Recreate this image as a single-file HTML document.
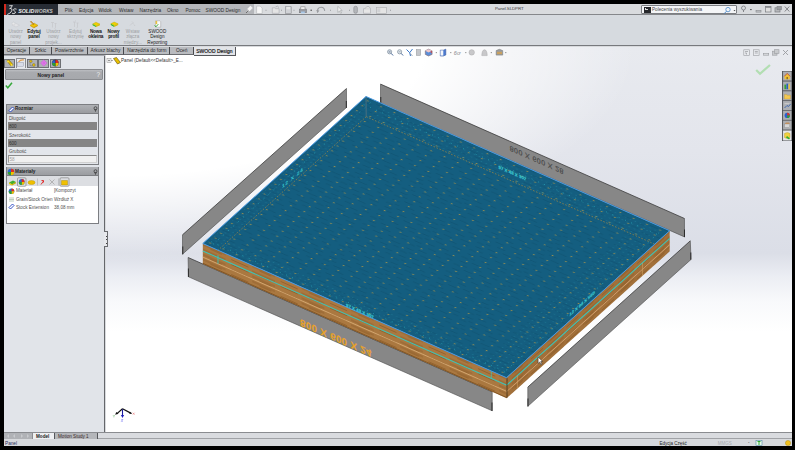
<!DOCTYPE html>
<html><head><meta charset="utf-8">
<style>
*{margin:0;padding:0;box-sizing:border-box}
html,body{width:795px;height:450px;overflow:hidden;background:#000;font-family:"Liberation Sans",sans-serif}
.a{position:absolute}
.t{position:absolute;white-space:nowrap;line-height:1}
.menu{position:absolute;white-space:nowrap;line-height:1;font-size:4.8px;color:#303030;top:8.6px}
.btn{position:absolute;font-size:4.6px;line-height:5.3px;text-align:center;color:#9c9ea2;white-space:nowrap;top:29.2px;width:30px;margin-left:-15px}
.btn.en{color:#151515;font-weight:bold;font-size:4.7px;letter-spacing:-0.17px}
.tab{position:absolute;z-index:5;top:46.5px;height:8px;background:#b9bbbf;border-right:1px solid #48494d;border-bottom:1px solid #6a6c70;font-size:4.8px;color:#2a2a2a;text-align:center;line-height:8px;white-space:nowrap}
.pm{position:absolute;font-size:4.6px;color:#505050;white-space:nowrap;line-height:1}
.ic{position:absolute}
</style></head><body>
<!-- window frame -->
<div class="a" style="left:4px;top:3.5px;width:788px;height:442.5px;background:#d8dadd"></div>
<!-- menu bar -->
<div class="a" style="left:4px;top:3.5px;width:249.5px;height:11.8px;background:#b4b6ba;border-bottom:1px solid #85878b"></div>
<div class="a" style="left:253.5px;top:3.5px;width:538.5px;height:11.8px;background:#d9dbde;border-bottom:1px solid #85878b"></div>
<div class="a" style="left:4px;top:3.5px;width:53.5px;height:11.8px;background:#272c34;border-left:2.2px solid #d42a1e"></div>
<!-- logo -->
<svg class="a" style="left:4px;top:3.5px" width="54" height="12" viewBox="0 0 54 12">
  <path d="M5.6 1.8 L8.4 1.6 L6.6 4.4 Q8.6 4.6 7.8 6.8 Q7 9.2 3.6 10.4 M6.6 4.4 L5.8 4.6" fill="none" stroke="#e8e8e8" stroke-width="0.9" stroke-linecap="round"/><path d="M12.2 5 Q10.4 4.2 9.6 5.4 Q9.2 6.6 10.6 7.1 Q12 7.7 11.2 9 Q10.2 10.1 8.4 9.4" fill="none" stroke="#e8e8e8" stroke-width="0.9" stroke-linecap="round"/>
  <text x="14.2" y="9.4" font-family="Liberation Sans" font-style="italic" font-weight="bold" font-size="5.3" fill="#f0f0f0" textLength="16.2" lengthAdjust="spacingAndGlyphs">SOLID</text>
  <text x="30.6" y="9.4" font-family="Liberation Sans" font-style="italic" font-weight="bold" font-size="5.3" fill="#c8c8c8" textLength="18.2" lengthAdjust="spacingAndGlyphs">WORKS</text>
</svg>
<div class="menu" style="left:64.8px">Plik</div>
<div class="menu" style="left:79px">Edycja</div>
<div class="menu" style="left:98.4px">Widok</div>
<div class="menu" style="left:119px">Wstaw</div>
<div class="menu" style="left:139.6px">Narzędzia</div>
<div class="menu" style="left:167px">Okno</div>
<div class="menu" style="left:185.4px">Pomoc</div>
<div class="menu" style="left:205.5px">SWOOD Design</div>
<!-- pin -->
<svg class="a" style="left:245px;top:5px" width="8" height="9" viewBox="0 0 8 9"><path d="M1.5 7.5 L3.5 5 M3 4 L5.5 1.5 L7 3 L4.5 5.5 Z" stroke="#f4f4f4" stroke-width="1.1" fill="#fafafa"/><path d="M1.2 8 L3.2 5.5" stroke="#444" stroke-width="0.8"/></svg>
<!-- quick access -->
<svg class="a" style="left:253px;top:3.5px" width="145" height="12" viewBox="253 3.5 145 12">
  <g stroke-width="0.6">
    <path d="M256.6 5.6 h3.6 l2 2 v5.4 h-5.6z" fill="#f6f6f6" stroke="#b0b2b6"/>
    <path d="M272.3 7.3 h2.6 l0.8 0.9 h3.4 v4.6 h-6.8z" fill="#e4e4e4" stroke="#a8aaae"/><path d="M275.5 6.5 q2-2 3.5 0.5" stroke="#9a9ca0" fill="none"/>
    <rect x="285.4" y="6.2" width="5.8" height="6.6" fill="#d0d2d6" stroke="#8a8c90"/><rect x="286.5" y="6.4" width="3.5" height="2.4" fill="#e8e8e8" stroke="none"/>
    <rect x="299.3" y="8.6" width="7.2" height="3.6" fill="#9a9ca2" stroke="#7a7c80"/><rect x="300.8" y="6.3" width="4.2" height="2.6" fill="#f0f0f0" stroke="#888"/><rect x="301" y="11" width="3.8" height="1.8" fill="#a8c8e8" stroke="none"/>
    <path d="M317.5 12 q-0.5-5.2 3.6-5.2 q3.2 0 3.6 3.6" stroke="#9a9ca0" stroke-width="1.1" fill="none"/><path d="M316.2 9.5 l1.4 3 l1.8-2.6z" fill="#9a9ca0" stroke="none"/>
    <path d="M337.8 5.8 v6.2 l1.5-1.4 l1.4 2.4 l0.9-0.5 l-1.3-2.4 h2z" fill="#f0f0f0" stroke="#a0a2a6"/>
    <rect x="353.8" y="5.8" width="3.6" height="7" rx="1.6" fill="#b4b6ba" stroke="#8a8c90"/>
    <path d="M363.5 8.2 h7 v4.6 h-7z" fill="#e6e6e6" stroke="#a8aaae"/><path d="M365 8.2 l1.8-2.2 h2.2 l1.5 2.2" fill="#e0e0e0" stroke="#a8aaae"/>
    <rect x="376.3" y="6.8" width="10" height="6" fill="#e4e4e4" stroke="#a8aaae"/><rect x="377.3" y="7.8" width="3" height="4" fill="#cfd1d4" stroke="none"/>
  </g>
  <g fill="#8a8c90">
    <rect x="265.5" y="9.3" width="1" height="0.8"/><rect x="281" y="9.3" width="1" height="0.8"/><rect x="293.5" y="9.3" width="1" height="0.8"/>
    <rect x="310.5" y="9.2" width="1.4" height="1" fill="#333"/><rect x="330" y="9.3" width="1" height="0.8"/><rect x="349" y="9.3" width="1" height="0.8"/><rect x="390" y="9.3" width="1" height="0.8"/>
  </g>
</svg>
<div class="t" style="left:495px;top:7.4px;font-size:4.4px;color:#404040;letter-spacing:-0.1px">Panel.SLDPRT</div>
<!-- search box -->
<div class="a" style="left:641px;top:5.3px;width:96px;height:9px;background:#f4f5f7;border:1px solid #7c7e82;border-radius:1px"></div>
<div class="a" style="left:643.5px;top:7px;width:7px;height:5.5px;background:#26282c"></div>
<div class="a" style="left:644.5px;top:8px;width:3px;height:2px;border-left:0.6px solid #ddd;border-bottom:0.6px solid #ddd"></div>
<div class="t" style="left:652px;top:7.9px;font-size:4.65px;color:#4a4a4a">Polecenia wyszukiwania</div>
<svg class="a" style="left:722px;top:5.5px" width="16" height="9" viewBox="0 0 16 9"><circle cx="6" cy="3.6" r="2.2" fill="none" stroke="#4a88c8" stroke-width="0.8"/><path d="M4.4 5.3 L2.2 7.6" stroke="#4a88c8" stroke-width="1"/><path d="M11.5 4 h2 l-1 1.2z" fill="#444"/></svg>
<!-- window controls -->
<svg class="a" style="left:738px;top:4px" width="54" height="11" viewBox="738 4 54 11">
  <circle cx="743.5" cy="8" r="2" fill="none" stroke="#7a7c80" stroke-width="0.8"/><path d="M743.5 10 v2" stroke="#7a7c80" stroke-width="0.9"/>
  <rect x="750.2" y="9.2" width="1.4" height="0.9" fill="#222"/>
  <rect x="756" y="10.5" width="5" height="1.6" fill="#bfc1c5" stroke="#7a7c80" stroke-width="0.5"/>
  <rect x="765.5" y="6.5" width="5.5" height="5.5" fill="#e0e0e0" stroke="#7a7c80" stroke-width="0.7"/><rect x="765.5" y="6.5" width="5.5" height="1.2" fill="#7a7c80"/>
  <rect x="775" y="7.8" width="5" height="4.2" fill="#b8babd" stroke="#7a7c80" stroke-width="0.7"/><rect x="777" y="6.3" width="4.5" height="3.5" fill="#9a9ca0" stroke="#7a7c80" stroke-width="0.5"/>
  <path d="M784.8 6.5 l4.5 5 M789.3 6.5 l-4.5 5" stroke="#7a7c80" stroke-width="0.9"/>
</svg>
<!-- command manager -->
<div class="a" style="left:4px;top:15.3px;width:788px;height:31.2px;background:#d6dadf;border-bottom:1px solid #77797d"></div>
<svg class="a" style="left:4px;top:16px" width="170" height="14" viewBox="4 16 170 14">
  <path d="M12 25 l3.5-1.8 l4 2 l-3.5 1.8z" fill="#e2e3e6" stroke="#c4c6ca" stroke-width="0.5"/><path d="M13.5 21.5 l0.6 1.4 l1.4 0.2 l-1 0.9 l0.3 1.4 l-1.3-0.7 l-1.3 0.7 l0.3-1.4 l-1-0.9 l1.4-0.2z" fill="#e8e8ea" stroke="#c8cacc" stroke-width="0.4"/>
  <path d="M30.2 25.2 l4-2 l3.6 2 l-4 2.2z" fill="#f4c800" stroke="#b08800" stroke-width="0.4"/><path d="M30.2 25.2 l3.6 2.2 v0.8 l-3.6-2.2z" fill="#d8a000"/><path d="M33.8 27.4 l4-2.2 v0.8 l-4 2.2z" fill="#c89000"/>
  <path d="M31 21 l3.2 3.2 l-0.9 0.6 l-3-3z" fill="#e8a020" stroke="#7a5010" stroke-width="0.35"/>
  <path d="M51 22.5 h3 M52.5 22.5 v5 M54.5 23.5 h2 M55.5 23.5 v4 q0 1 -1 1" stroke="#c6c8cb" stroke-width="0.8" fill="none"/>
  <path d="M73 22 h3 M74.5 22 v5 M76.5 23 h2 M77.5 23 v4 q0 1 -1 1" stroke="#c6c8cb" stroke-width="0.8" fill="none"/><path d="M75 21 l1-0.8" stroke="#c6c8cb" stroke-width="0.5"/>
  <path d="M92.6 24 l3.3-1.8 l4 1.8 l-3.3 1.9z" fill="#f0d000" stroke="#b09a00" stroke-width="0.35"/><path d="M92.6 24 l3.4 1.9 v1.2 l-3.4-1.9z" fill="#30b818"/><path d="M96 25.9 l4-1.9 v1.2 l-4 1.9z" fill="#d8b800"/>
  <path d="M110.8 23.8 l3.3-1.8 l4 1.8 l-3.3 1.9z" fill="#f0d000" stroke="#b09a00" stroke-width="0.35"/><path d="M110.8 23.8 l3.4 1.9 v1.2 l-3.4-1.9z" fill="#30b818"/><path d="M114.2 25.7 l4-1.9 v1.2 l-4 1.9z" fill="#d8b800"/>
  <path d="M130 25.5 l2.5-2.5 l1.2 1.2 M132 21.5 l1.5 1.5 M134 24.5 l1 1.5" stroke="#c6c8cb" stroke-width="0.8" fill="none"/>
  <path d="M155.5 20.8 h4.4 l0.8 0.8 v5.6 h-5.2z" fill="#fafafa" stroke="#8a8c90" stroke-width="0.4"/><rect x="155.6" y="20.9" width="1.6" height="3.2" fill="#e8c040"/><path d="M154.6 25.4 l1.3 1.4 l2.4-2.6" stroke="#28a828" stroke-width="0.9" fill="none"/>
</svg>
<div class="btn" style="left:15.7px">Utwórz<br>nowy<br>panel</div>
<div class="btn en" style="left:34px">Edytuj<br>panel</div>
<div class="btn" style="left:53.5px">Utwórz<br>nowy<br>projek...</div>
<div class="btn" style="left:75.5px">Edytuj<br>skrzynię</div>
<div class="btn en" style="left:95.8px">Nowa<br>okleina</div>
<div class="btn en" style="left:113.5px">Nowy<br>profil</div>
<div class="btn" style="left:132.7px">Wstaw<br>złącza<br>między...</div>
<div class="btn" style="left:157.3px;color:#222">SWOOD<br>Design<br>Reporting</div>
<!-- tabs -->
<div class="a" style="z-index:4;left:4px;top:46.5px;width:190px;height:8px;background:#b9bbbf;border-bottom:1px solid #6a6c70"></div>
<div class="tab" style="left:4px;width:25.8px">Operacje</div>
<div class="tab" style="left:29.8px;width:22.4px">Szkic</div>
<div class="tab" style="left:52.2px;width:35.4px">Powierzchnie</div>
<div class="tab" style="left:87.6px;width:36.6px">Arkusz blachy</div>
<div class="tab" style="left:124.2px;width:46.3px">Narzędzia do form</div>
<div class="tab" style="left:170.5px;width:23.3px">Oceń</div>
<div class="tab" style="left:193.7px;width:42.3px;height:9px;background:#e2e4e8;color:#222;border-right:1px solid #55575b;border-bottom:1px solid #55575b;font-size:5px;color:#111;-webkit-text-stroke:0.15px #111">SWOOD Design</div>
<!-- left panel -->
<div class="a" style="left:4px;top:55.3px;width:100.5px;height:377px;background:#e1e4e9;border-right:1.2px solid #65676b"></div>
<div class="a" style="left:4px;top:54.5px;width:101px;height:1px;background:#a8aab0"></div>
<!-- panel tabs -->
<div class="a" style="left:4px;top:58.5px;width:11px;height:9px;background:#aeb0b4;border:0.7px solid #6e7074"></div>
<div class="a" style="left:15.8px;top:58px;width:10.2px;height:9.5px;background:#e6e8ec;border:0.7px solid #8a8c90;border-bottom:none"></div>
<div class="a" style="left:26.5px;top:58.5px;width:11.2px;height:9px;background:#aeb0b4;border:0.7px solid #6e7074"></div>
<div class="a" style="left:38.2px;top:58.5px;width:11.2px;height:9px;background:#aeb0b4;border:0.7px solid #6e7074"></div>
<div class="a" style="left:49.9px;top:58.5px;width:10.8px;height:9px;background:#aeb0b4;border:0.7px solid #6e7074"></div>
<svg class="a" style="left:4px;top:58px" width="58" height="10" viewBox="4 58 58 10">
  <path d="M6.8 60.8 l2.2-0.8 l4 4.6 l-2.2 1.2z" fill="#e8c000" stroke="#5a4a00" stroke-width="0.45"/><circle cx="8" cy="61.5" r="1" fill="#f8e040"/><circle cx="11.6" cy="65" r="1" fill="#f8e040"/>
  <rect x="17.5" y="62.3" width="6.2" height="4" fill="#d8dce8" stroke="#8a90a0" stroke-width="0.4"/><path d="M18.5 62 q2-2.6 5.5-2" stroke="#e0a050" stroke-width="1.2" fill="none"/>
  <circle cx="30.8" cy="61.3" r="1.3" fill="#e8c000" stroke="#555" stroke-width="0.4"/><circle cx="33.8" cy="65" r="1.4" fill="#e8c000" stroke="#555" stroke-width="0.4"/><path d="M30 62.5 v3 l2.5 0.5" stroke="#777" stroke-width="0.6" fill="none"/>
  <path d="M43.8 59.8 l3.2 3.2 l-3.2 3.2 l-3.2-3.2z" fill="#e078e8" stroke="#c050d0" stroke-width="0.4"/><circle cx="43.8" cy="63" r="0.9" fill="none" stroke="#c050d0" stroke-width="0.3"/>
  <circle cx="55.3" cy="63" r="3.2" fill="#2a60d0" stroke="#222" stroke-width="0.35"/><path d="M55.3 63 L55.3 59.8 A3.2 3.2 0 0 1 58.5 63z" fill="#e02818"/><path d="M55.3 63 L58.5 63 A3.2 3.2 0 0 1 55.3 66.2z" fill="#f0c000"/><path d="M55.3 63 L55.3 66.2 A3.2 3.2 0 0 1 52.1 63z" fill="#30a030"/><path d="M55.3 59.8 v6.4" stroke="#111" stroke-width="0.3"/>
</svg>
<!-- Nowy panel header -->
<div class="a" style="left:4.5px;top:69px;width:98.8px;height:10.7px;background:linear-gradient(#bcbec2 0%,#a9abaf 25%,#a6a8ac 100%);border:0.6px solid #8a8c90;border-radius:1px"></div>
<div class="t" style="left:37.5px;top:74.2px;font-size:4.8px;font-weight:bold;color:#1e1e1e">Nowy panel</div>
<div class="t" style="left:96.5px;top:71.6px;font-size:6.4px;color:#eeeeee">?</div>
<svg class="a" style="left:5px;top:82px" width="8" height="7" viewBox="0 0 8 7"><path d="M0.8 3.6 L2.8 5.8 L7 0.8" fill="none" stroke="#36a83a" stroke-width="1.5"/></svg>
<!-- Rozmiar group -->
<div class="a" style="left:6.3px;top:104.4px;width:92.6px;height:60.6px;background:#e3e6eb;border:0.8px solid #7c7e82"></div>
<div class="a" style="left:6.7px;top:104.8px;width:91.8px;height:8.9px;background:linear-gradient(#aeb0b4,#9a9ca0);border-bottom:0.6px solid #7c7e82"></div>
<svg class="a" style="left:7.5px;top:105.5px" width="7" height="7" viewBox="0 0 7 7"><path d="M1 4.5 L4.5 1 L6 2.5 L2.5 6z" fill="#fff" stroke="#2040c0" stroke-width="0.9"/></svg>
<div class="t" style="left:15px;top:107.2px;font-size:4.6px;font-weight:bold;color:#1e1e1e">Rozmiar</div>
<svg class="a" style="left:93px;top:106px" width="5" height="6" viewBox="0 0 5 6"><circle cx="2.5" cy="2.2" r="1.5" fill="none" stroke="#333" stroke-width="0.7"/><path d="M1 3.8 L4 3.8 M2.5 3.8 V5.8" stroke="#333" stroke-width="0.6"/></svg>
<div class="pm" style="left:9px;top:117.3px">Długość</div>
<div class="a" style="left:8.2px;top:122.2px;width:88.8px;height:7.8px;background:#858585"></div>
<div class="pm" style="left:9px;top:125.2px;color:#303030">800</div>
<div class="pm" style="left:9px;top:133.6px">Szerokość</div>
<div class="a" style="left:8.2px;top:138.9px;width:88.8px;height:7.8px;background:#858585"></div>
<div class="pm" style="left:9px;top:141.9px;color:#303030">600</div>
<div class="pm" style="left:9px;top:150px">Grubość</div>
<div class="a" style="left:8.2px;top:155.2px;width:88.8px;height:7.8px;background:#f0f0f0;border:0.7px solid #d0d0d0;border-top-color:#8a8a8a;border-left-color:#9a9a9a"></div>
<div class="pm" style="left:9.5px;top:158px;color:#a0a0a0">58</div>
<!-- Materialy group -->
<div class="a" style="left:6.4px;top:167px;width:92.5px;height:56.7px;background:#fff;border:0.8px solid #7c7e82"></div>
<div class="a" style="left:6.8px;top:167.4px;width:91.7px;height:9px;background:linear-gradient(#aeb0b4,#9a9ca0);border-bottom:0.6px solid #7c7e82"></div>
<div class="a" style="left:6.8px;top:176.4px;width:91.7px;height:10px;background:#dcdee2"></div>
<svg class="a" style="left:7px;top:167.5px" width="8" height="8" viewBox="0 0 8 8"><circle cx="4" cy="4" r="3.2" fill="#2a6ad0"/><path d="M4 4 L4 0.8 A3.2 3.2 0 0 1 7.2 4z" fill="#e03020"/><path d="M4 4 L7.2 4 A3.2 3.2 0 0 1 4 7.2z" fill="#f0c000"/><path d="M4 4 L4 7.2 A3.2 3.2 0 0 1 0.8 4z" fill="#30a030"/></svg>
<div class="t" style="left:15px;top:169.8px;font-size:4.7px;font-weight:bold;color:#1e1e1e">Materiały</div>
<svg class="a" style="left:93px;top:169px" width="5" height="6" viewBox="0 0 5 6"><circle cx="2.5" cy="2.2" r="1.5" fill="none" stroke="#333" stroke-width="0.7"/><path d="M1 3.8 L4 3.8 M2.5 3.8 V5.8" stroke="#333" stroke-width="0.6"/></svg>
<svg class="a" style="left:7px;top:176.5px" width="64" height="10" viewBox="7 176.5 64 10">
  <path d="M9 182 l4-2 l3 1.5 l-4 2.5z" fill="#40b030"/><path d="M9 182 l3 1.8 v1.2 l-3-1.5z" fill="#e8c800"/><path d="M12 183.8 l4-2.3 v1.2 l-4 2.3z" fill="#c8a800"/>
  <rect x="17.5" y="177.3" width="8.5" height="8.5" fill="none" stroke="#777" stroke-width="0.6" rx="1"/>
  <circle cx="21.7" cy="181.5" r="2.9" fill="#2a6ad0"/><path d="M21.7 181.5 L21.7 178.6 A2.9 2.9 0 0 1 24.6 181.5z" fill="#e03020"/><path d="M21.7 181.5 L24.6 181.5 A2.9 2.9 0 0 1 21.7 184.4z" fill="#f0c000"/><path d="M21.7 181.5 L21.7 184.4 A2.9 2.9 0 0 1 18.8 181.5z" fill="#30a030"/>
  <ellipse cx="31.5" cy="182" rx="3.5" ry="2" fill="#f0c000" stroke="#b09000" stroke-width="0.4"/>
  <rect x="37.3" y="178" width="0.5" height="7" fill="#a0a2a6"/>
  <path d="M41 184 l2.5-3.5 M41.5 180 l2 0 l0 2" stroke="#e02020" stroke-width="0.9" fill="none"/>
  <path d="M49.5 179 l5 5 M54.5 179 l-5 5" stroke="#a8a8a8" stroke-width="0.8"/>
  <rect x="58.3" y="178" width="0.5" height="7" fill="#a0a2a6"/>
  <rect x="60" y="177.3" width="9" height="8.5" fill="none" stroke="#777" stroke-width="0.6" rx="1"/>
  <path d="M61.5 180 h6 v4.5 h-6z" fill="#f0c000" stroke="#a08000" stroke-width="0.4"/>
</svg>
<svg class="a" style="left:7.5px;top:187.5px" width="8" height="24" viewBox="0 0 8 24">
  <circle cx="3.5" cy="3.2" r="2.8" fill="#2a6ad0"/><path d="M3.5 3.2 L3.5 0.4 A2.8 2.8 0 0 1 6.3 3.2z" fill="#e03020"/><path d="M3.5 3.2 L6.3 3.2 A2.8 2.8 0 0 1 3.5 6z" fill="#f0c000"/><path d="M3.5 3.2 L3.5 6 A2.8 2.8 0 0 1 0.7 3.2z" fill="#30a030"/>
  <path d="M1 10 h5 M1 11.5 h5 M1 13 h5" stroke="#7a9a7a" stroke-width="0.5"/>
  <path d="M1 19.5 L4.5 16 L6 17.5 L2.5 21z" fill="#fff" stroke="#2040c0" stroke-width="0.9"/>
</svg>
<div class="pm" style="left:16px;top:188.6px">Materiał</div>
<div class="pm" style="left:54px;top:188.6px">[Kompozyt</div>
<div class="pm" style="left:16px;top:197.8px">Grain/Stock Orien</div>
<div class="pm" style="left:54px;top:197.8px">Wzdłuż X</div>
<div class="pm" style="left:16px;top:205.6px">Stock Extension</div>
<div class="pm" style="left:54px;top:205.6px">38,08 mm</div>
<!-- splitter bump -->
<div class="a" style="z-index:5;left:104.3px;top:231.4px;width:4.2px;height:16px;background:#e6e8ec;border:1px solid #6a6c70;border-left:none"></div>
<div class="a" style="z-index:6;left:106px;top:235.5px;width:1px;height:1px;background:#444"></div>
<div class="a" style="z-index:6;left:106px;top:239px;width:1px;height:1px;background:#444"></div>
<div class="a" style="z-index:6;left:106px;top:242.5px;width:1px;height:1px;background:#444"></div>

<!-- viewport -->
<div class="a" id="vp" style="left:105.5px;top:46.5px;width:686.5px;height:385.8px;overflow:hidden;background:linear-gradient(180deg,#e8eaef 0px,#e3e5ec 104px,#dbdee7 206px,#ebedf3 229px,#f8f9fb 254px,#ffffff 285px,#ffffff 100%)">
  <div class="a" style="left:0;top:0;width:686.5px;height:385.8px;background:radial-gradient(ellipse 530px 215px at 0 0,#ffffff 0%,#ffffff 60%,rgba(255,255,255,0) 100%)"></div>
</div>
<!-- tree -->
<svg class="a" style="left:105.5px;top:57px" width="16" height="8" viewBox="0 0 16 8">
  <rect x="1" y="1.5" width="4" height="4" fill="none" stroke="#888" stroke-width="0.5"/><path d="M2 3.5 h2 M3 2.5 v2 M5 3.5 h2" stroke="#555" stroke-width="0.5"/>
  <path d="M7.5 1.5 l3-1 l4 5 l-3 1.5z" fill="#e8c000" stroke="#5a4a10" stroke-width="0.6"/>
</svg>
<div class="t" style="left:121px;top:58.5px;font-size:4.65px;color:#333">Panel  (Default&lt;&lt;Default&gt;_E...</div>
<!-- heads-up toolbar -->
<svg class="a" style="left:385px;top:48px" width="125" height="10" viewBox="385 48 125 10">
  <g stroke-width="0.6">
    <circle cx="389.6" cy="51.8" r="2.1" fill="#dfe6ee" stroke="#6a7a8a"/><rect x="388.6" y="50.8" width="2" height="2" fill="#9aa8b8" stroke="none"/><path d="M391.1 53.3 l2 2.2" stroke="#4a6a9a" stroke-width="1"/>
    <circle cx="399.6" cy="51.8" r="2.1" fill="#e6ecf2" stroke="#6a7a8a"/><path d="M398.6 51.8 h2" stroke="#6a7a8a"/><path d="M401.1 53.3 l2 2.2" stroke="#4a6a9a" stroke-width="1"/>
    <path d="M406.5 49.5 l3.2 3.2 l2.8-3.7 M409.7 52.7 l0.8 3.3" stroke="#3a78c8" stroke-width="1" fill="none"/>
    <path d="M410 54 l2.5 1.5" stroke="#7a8aa0" stroke-width="0.8"/>
    <rect x="416.3" y="49.6" width="4.4" height="5.8" fill="#c4c6ca" stroke="#a0a2a6"/>
    <path d="M425.3 50.8 l3.2-1.6 l3.6 1.6 v3.6 l-3.6 1.6 l-3.2-1.6z" fill="#5c8ed8" stroke="#8a6a6a"/><path d="M428.5 49.2 l3.6 1.6 l-3.6 1.6 l-3.2-1.6z" fill="#f0c8c8" stroke="none"/><path d="M430 52 l2 -1 v2z" fill="#d04040" stroke="none"/>
    <path d="M440.3 50.2 h3 l2.5-1 v5.8 l-2.5 1 h-3z" fill="#4a7ad0" stroke="#3a5aa0"/><rect x="440.5" y="50.4" width="2.8" height="5.2" fill="#f4f6fa" stroke="none"/>
    <circle cx="471.7" cy="52.4" r="2.7" fill="#c8c8ca" stroke="#b0b0b2"/>
    <path d="M481.8 55.6 q0.2-5.8 2.7-5.8 q2.5 0 2.7 5.8z" fill="#c8c8ca" stroke="#b0b0b2"/>
    <path d="M496.2 50.6 l3.2-1.3 l3.3 1.3 v4.5 h-6.5z" fill="#9a9c9e" stroke="#7a7c7e"/><rect x="497" y="51.8" width="5" height="2.4" fill="#c8a060" stroke="none"/>
  </g>
  <text x="453.8" y="54.8" font-family="Liberation Sans" font-style="italic" font-size="5.6" fill="#8a8c90">6ơ</text>
  <g fill="#555"><rect x="435.8" y="52.3" width="1" height="0.8"/><rect x="450.3" y="52.3" width="1" height="0.8"/><rect x="465.3" y="52.3" width="1" height="0.8"/><rect x="490.8" y="52.3" width="1" height="0.8"/><rect x="505.3" y="52.3" width="1" height="0.8"/></g>
</svg>
<!-- viewport window icons -->
<svg class="a" style="left:740px;top:48px" width="52" height="9" viewBox="740 48 52 9">
  <g stroke="#9a9ca0" stroke-width="0.6" fill="#e8eaee">
    <rect x="743.8" y="49.8" width="5.5" height="5.5"/><rect x="753.6" y="49.8" width="5.5" height="5.5"/>
    <path d="M745 51.5 h3 M745 53 h1.5 v1.5" fill="none" stroke="#8a8c90"/><path d="M754.8 51.5 h3 M754.8 53 h3" fill="none" stroke="#8a8c90"/>
    <rect x="763.5" y="53.6" width="5.2" height="1.6" fill="#d8dadd"/>
    <rect x="772.5" y="51.2" width="4.5" height="4" fill="#c8cacd"/><rect x="774.5" y="49.7" width="4.5" height="3.6" fill="#c8cacd"/>
    <path d="M783 50 l5 5 M788 50 l-5 5" stroke-width="0.9"/>
  </g>
</svg>
<svg class="a" style="left:754px;top:63px" width="18" height="14" viewBox="0 0 18 14"><path d="M2.2 7 L6 10.8 L16 2" fill="none" stroke="#b2deb2" stroke-width="2.2"/></svg>
<!-- task pane -->
<div class="a" style="left:782px;top:71px;width:10px;height:70px;background:#9a9ca0;border-left:0.8px solid #505256"></div>
<svg class="a" style="left:782px;top:71px" width="10" height="70" viewBox="0 0 10 70">
  <g stroke="#505256" stroke-width="0.5" fill="#acaeb2"><rect x="0.8" y="0.4" width="9" height="9.5"/><rect x="0.8" y="10.2" width="9" height="9.5"/><rect x="0.8" y="20" width="9" height="9.5"/><rect x="0.8" y="29.8" width="9" height="9.5"/><rect x="0.8" y="39.6" width="9" height="9.5"/><rect x="0.8" y="49.4" width="9" height="9.5"/><rect x="0.8" y="59.2" width="9" height="10.6" fill="#e4e6ea"/></g>
  <path d="M2.6 5.2 l2.6-2.6 l2.6 2.6 v3 h-5.2z" fill="#f2c030"/><path d="M2.2 5.4 l3-3 l3 3" stroke="#c03020" stroke-width="0.7" fill="none"/><rect x="4.5" y="6" width="1.4" height="2.2" fill="#8a6a20"/>
  <rect x="2.4" y="13.6" width="1.8" height="4.6" fill="#38a038"/><rect x="4.4" y="12.6" width="1.8" height="5.6" fill="#2860c0"/><rect x="6.4" y="13.2" width="1.6" height="5" fill="#e8c040"/>
  <path d="M2.4 23.4 h2.2 l0.6 0.8 h3.2 v3.8 h-6z" fill="#f4c850" stroke="#c09020" stroke-width="0.3"/>
  <path d="M2.5 37 l2.5-2.5 l1.5 1 l2-2.5" stroke="#2a5ab0" stroke-width="0.8" fill="none"/><rect x="2.5" y="32" width="5" height="1.2" fill="#c8c8c8"/>
  <circle cx="5.2" cy="44.4" r="2.6" fill="#2a60d0"/><path d="M5.2 44.4 V41.8 A2.6 2.6 0 0 1 7.8 44.4z" fill="#e03020"/><path d="M5.2 44.4 H7.8 A2.6 2.6 0 0 1 5.2 47z" fill="#30a030"/>
  <rect x="2.6" y="53" width="5.2" height="3.6" fill="#d8d8d8" stroke="#777" stroke-width="0.3"/><path d="M2.6 53 l1.5-1.5 h3 l0.7 1.5" fill="#c09060"/>
  <path d="M2.4 62.5 q3-2 5.6 0 v4 q-3 2 -5.6 0z" fill="#f0d040" stroke="#a08010" stroke-width="0.3"/><path d="M5 65 l3 2.5 l-1 1 l-3-2z" fill="#30b030"/>
</svg>

<!-- 3D scene -->
<svg class="a" style="left:105.5px;top:46.5px" width="686.5" height="385.8" viewBox="105.5 46.5 686.5 385.8">
  <defs>
    <pattern id="odots" patternUnits="userSpaceOnUse" width="35" height="20" x="8" y="6">
      <ellipse cx="4" cy="4" rx="2.6" ry="1.7" fill="#b49a46" opacity="0.85"/>
    </pattern>
    <pattern id="grain" patternUnits="userSpaceOnUse" width="120" height="29">
      <path d="M2 3 q8 -1 18 0.5 M34 9 q10 1 22 -0.5 M70 4 q9 -1 20 1 M8 17 q10 1 19 -1 M48 22 q10 -1 21 0.5 M86 15 q12 1 24 -1 M100 26 q6 -1 14 0 M22 27 q6 0.5 12 0" stroke="#0a4560" stroke-width="2.2" fill="none" opacity="0.38"/>
    </pattern>
    <pattern id="cdots" patternUnits="userSpaceOnUse" width="13" height="11" x="3" y="2">
      <ellipse cx="3" cy="3" rx="2.2" ry="1.6" fill="#2fa8b8" opacity="0.8"/>
    </pattern>
    <pattern id="wgrain" patternUnits="userSpaceOnUse" width="130" height="5">
      <path d="M0 1 h60 M75 3.5 h45 M20 2.3 h30" stroke="#7a4c1a" stroke-width="0.9" opacity="0.75"/>
    </pattern>
  </defs>
  <!-- strips -->
  <g stroke-linejoin="round">
    <polygon points="182,234.3 346,88 346,107 182,253.7" fill="#878787"/>
    <path d="M182,234.3 L346,88" stroke="#333" stroke-width="0.75" fill="none"/>
    <path d="M182,253.7 L346,107 M346,88 V107 M182,234.3 V253.7" stroke="#4a4a4a" stroke-width="0.6" fill="none"/>
    <polygon points="380,83.6 684,218 684,236.4 380,102.6" fill="#878787"/>
    <path d="M380,83.6 L684,218" stroke="#333" stroke-width="0.75" fill="none"/>
    <path d="M684,218 V236.4 L380,102.6 V83.6" stroke="#4a4a4a" stroke-width="0.6" fill="none"/>
    <polygon points="187.6,257 491.7,391.3 491.7,410.3 188,276.3" fill="#878787"/>
    <path d="M187.6,257 L491.7,391.3" stroke="#333" stroke-width="0.75" fill="none"/>
    <path d="M491.7,391.3 V410.3 L188,276.3 L187.6,257" stroke="#4a4a4a" stroke-width="0.6" fill="none"/>
    <polygon points="527.3,386.6 689.8,240.3 690.5,259 527.3,405.8" fill="#878787"/>
    <path d="M527.3,386.6 L689.8,240.3" stroke="#333" stroke-width="0.75" fill="none"/>
    <path d="M689.8,240.3 L690.5,259 L527.3,405.8 V386.6" stroke="#4a4a4a" stroke-width="0.6" fill="none"/>
  </g>
  <path d="M345.8 100.5 V107.5 M380.3 96.5 V103 M182.3 246 V253.8 M187.9 268 V276.5 M491.5 402 V410.5 M527.5 398 V406 M684 229 V236.6 M690.3 252 V259.2" stroke="#222" stroke-width="0.9"/>
  <!-- strip texts -->
  <text transform="matrix(1,0.441,0,-1,299.5,318.5)" font-family="Liberation Sans" font-weight="bold" font-size="9.7" fill="#e8a228" stroke="#e8a228" stroke-width="0.1" letter-spacing="0.35">800 X 600 X 24</text>
  <text transform="matrix(1,0.441,0,-1,509.3,145.2)" font-family="Liberation Sans" font-size="7" fill="#4a4a4a" stroke="#4a4a4a" stroke-width="0.2" letter-spacing="0.42">800 X 600 X 28</text>
  <!-- wood left face -->
  <g transform="matrix(0.379625,0.16775,0,1,202.3,243)">
    <rect x="0" y="0" width="801" height="20.4" fill="#aa7840"/>
    <rect x="0" y="0" width="801" height="20.4" fill="url(#wgrain)"/>
    <path d="M0 7.4 H801" stroke="#3cc4b8" stroke-width="1.1" vector-effect="non-scaling-stroke"/>
    <path d="M0 13.6 H801" stroke="#dcb07a" stroke-width="0.8" vector-effect="non-scaling-stroke"/>
    <path d="M0 19.8 H801" stroke="#6a4010" stroke-width="0.6" vector-effect="non-scaling-stroke"/>
    <path d="M40 5 V13.5" stroke="#3cc4b8" stroke-width="0.9" vector-effect="non-scaling-stroke"/>
    <path d="M760 0 V7.4" stroke="#3cc4b8" stroke-width="0.7" vector-effect="non-scaling-stroke"/>
  </g>
  <!-- wood right face -->
  <g transform="matrix(-0.272,0.245,0,1,669.2,230.2)">
    <rect x="0" y="0" width="600" height="20.6" fill="#a2703a"/>
    <rect x="0" y="0" width="600" height="20.6" fill="url(#wgrain)"/>
    <path d="M0 7.6 H600" stroke="#3cc4b8" stroke-width="1.1" vector-effect="non-scaling-stroke"/>
    <path d="M0 14 H600" stroke="#d8a878" stroke-width="0.8" vector-effect="non-scaling-stroke"/>
    <path d="M100 7.6 V20.6 M560 7.6 V20.6" stroke="#d8a868" stroke-width="0.5" vector-effect="non-scaling-stroke"/>
  </g>
  <path d="M506.5,377.4 V397.4" stroke="#3a2a10" stroke-width="0.7"/>
  <!-- top face -->
  <g transform="matrix(0.379625,0.16775,-0.272,0.245,365.5,96)">
    <rect x="0" y="0" width="800" height="600" fill="#145e80"/>
    <rect x="0" y="0" width="800" height="600" fill="url(#grain)"/>
    <rect x="0" y="0" width="800" height="600" fill="url(#odots)"/>
    <rect x="45" y="8" width="740" height="45" fill="url(#cdots)" opacity="0.38"/>
    <rect x="6" y="60" width="30" height="530" fill="url(#cdots)" opacity="0.38"/>
    <rect x="730" y="60" width="64" height="530" fill="url(#cdots)" opacity="0.35"/>
    <rect x="45" y="560" width="740" height="35" fill="url(#cdots)" opacity="0.35"/>
    <path d="M40 55 H800 M40 55 V600" stroke="#a88c40" stroke-width="0.8" stroke-dasharray="1.6 1.6" opacity="0.85" vector-effect="non-scaling-stroke" fill="none"/>
    <path d="M0 0 L40 55" stroke="#6a7a80" stroke-width="0.6" vector-effect="non-scaling-stroke"/>
    <path d="M12 25 H790 M20 12 V590 M12 585 H790 M785 20 V590" stroke="#2ab0c0" stroke-width="0.9" stroke-dasharray="0.8 6" vector-effect="non-scaling-stroke" fill="none" opacity="0.9"/>
    <rect x="0" y="0" width="800" height="600" fill="none" stroke="#4898e0" stroke-width="1" vector-effect="non-scaling-stroke"/>
  </g>
  <!-- cyan labels on top -->
  <text transform="matrix(1,-0.84,0,1,281.5,188)" font-family="Liberation Sans" font-weight="bold" font-size="5" fill="#38c4cc" letter-spacing="0.6">12 X 24</text>
  <text transform="matrix(1,0.441,0,1,498,168)" font-family="Liberation Sans" font-weight="bold" font-size="4.4" fill="#3ccad2" stroke="#3ccad2" stroke-width="0.15">97 X 48 X 307</text>
  <text transform="matrix(1,0.441,0,1,345.5,306)" font-family="Liberation Sans" font-weight="bold" font-size="4.4" fill="#3ccad2" stroke="#3ccad2" stroke-width="0.15">97 X 48 X 307</text>
  <text transform="matrix(1,-0.9,0,1,569,316)" font-family="Liberation Sans" font-weight="bold" font-size="4.1" fill="#3ccad2" stroke="#3ccad2" stroke-width="0.15" letter-spacing="-0.05">12 X 96 X 560</text>
  <!-- cursor -->
  <path d="M537.6 356.5 V363 L539.2 361.5 L540.6 364.3 L541.5 363.8 L540.2 361 L542.2 361 Z" fill="#fff" stroke="#222" stroke-width="0.5"/>
  <!-- triad -->
  <g>
    <path d="M122 408.3 L116.2 413.4 M122 408.3 L129.8 412.4" stroke="#111" stroke-width="1.2" fill="none" stroke-linejoin="round"/>
    <path d="M122 408.8 V415.5" stroke="#1a1aa0" stroke-width="1.1"/>
    <path d="M114.6 414.2 l1.2-2.6 l2.2 1.6z" fill="#111"/>
    <path d="M131.6 413.2 l-2.8 0.2 l1.2-2.2z" fill="#111"/>
    <path d="M120.4 414.6 h3.2 l-1.6 3z" fill="#1a1ab8"/>
    <path d="M112.4 414.6 l1 1 l1-1 M113.4 415.6 v1.3" stroke="#60b060" stroke-width="0.5" fill="none"/>
    <path d="M132.3 412.2 l1.8 2 M134.1 412.2 l-1.8 2" stroke="#e86060" stroke-width="0.5"/>
    <path d="M120.8 419 h1.6 l-1.6 1.8 h1.6" stroke="#6060f0" stroke-width="0.5" fill="none"/>
  </g>
</svg>
<!-- bottom tabs / status -->
<div class="a" style="left:4px;top:432.3px;width:788px;height:7px;background:#d9dbdf;border-top:0.8px solid #8a8c90;border-bottom:0.8px solid #a0a2a6"></div>
<div class="a" style="left:4px;top:432.8px;width:27.5px;height:6px;background:#b0b2b6"></div>
<svg class="a" style="left:4px;top:432.8px" width="28" height="6" viewBox="0 0 28 6"><g fill="#c8cacd"><path d="M3 3 l2-2 v4z"/><path d="M9 3 l2-2 v4z"/><path d="M17 1 l2 2 l-2 2z"/><path d="M23 1 l2 2 l-2 2z"/></g></svg>
<div class="a" style="left:31.8px;top:432.8px;width:22.8px;height:6.2px;background:#eeeff2;border-right:0.7px solid #55575b;border-left:0.7px solid #8a8c90"></div>
<div class="t" style="left:36px;top:434.5px;font-size:4.6px;font-weight:bold;color:#1a1a1a">Model</div>
<div class="a" style="left:54.6px;top:432.8px;width:43px;height:6px;background:#b4b6ba;border-right:0.7px solid #55575b"></div>
<div class="t" style="left:58px;top:434.5px;font-size:4.6px;color:#3a2a2a">Motion Study 1</div>
<div class="a" style="left:4px;top:439.7px;width:788px;height:6.3px;background:#d6d8dc"></div>
<div class="t" style="left:5px;top:441.8px;font-size:4.7px;color:#2a2a5a">Panel</div>
<div class="t" style="left:659.6px;top:441.8px;font-size:4.5px;color:#222">Edycja Część</div>
<div class="t" style="left:717.7px;top:441.8px;font-size:4.5px;color:#a8aaae">MMGS</div>
<div class="t" style="left:748px;top:440.5px;font-size:4.5px;color:#333">-</div>
<svg class="a" style="left:755px;top:440px" width="37" height="6" viewBox="0 0 37 6"><rect x="1" y="0.3" width="6" height="5.2" fill="#e8f8e8" stroke="#3a7aa0" stroke-width="0.5"/><path d="M2.5 1.5 h3 M4 1.5 v3.5" stroke="#20a020" stroke-width="0.9"/><circle cx="33" cy="3" r="2.6" fill="#f0c020" stroke="#a08010" stroke-width="0.4"/></svg>

</body></html>
